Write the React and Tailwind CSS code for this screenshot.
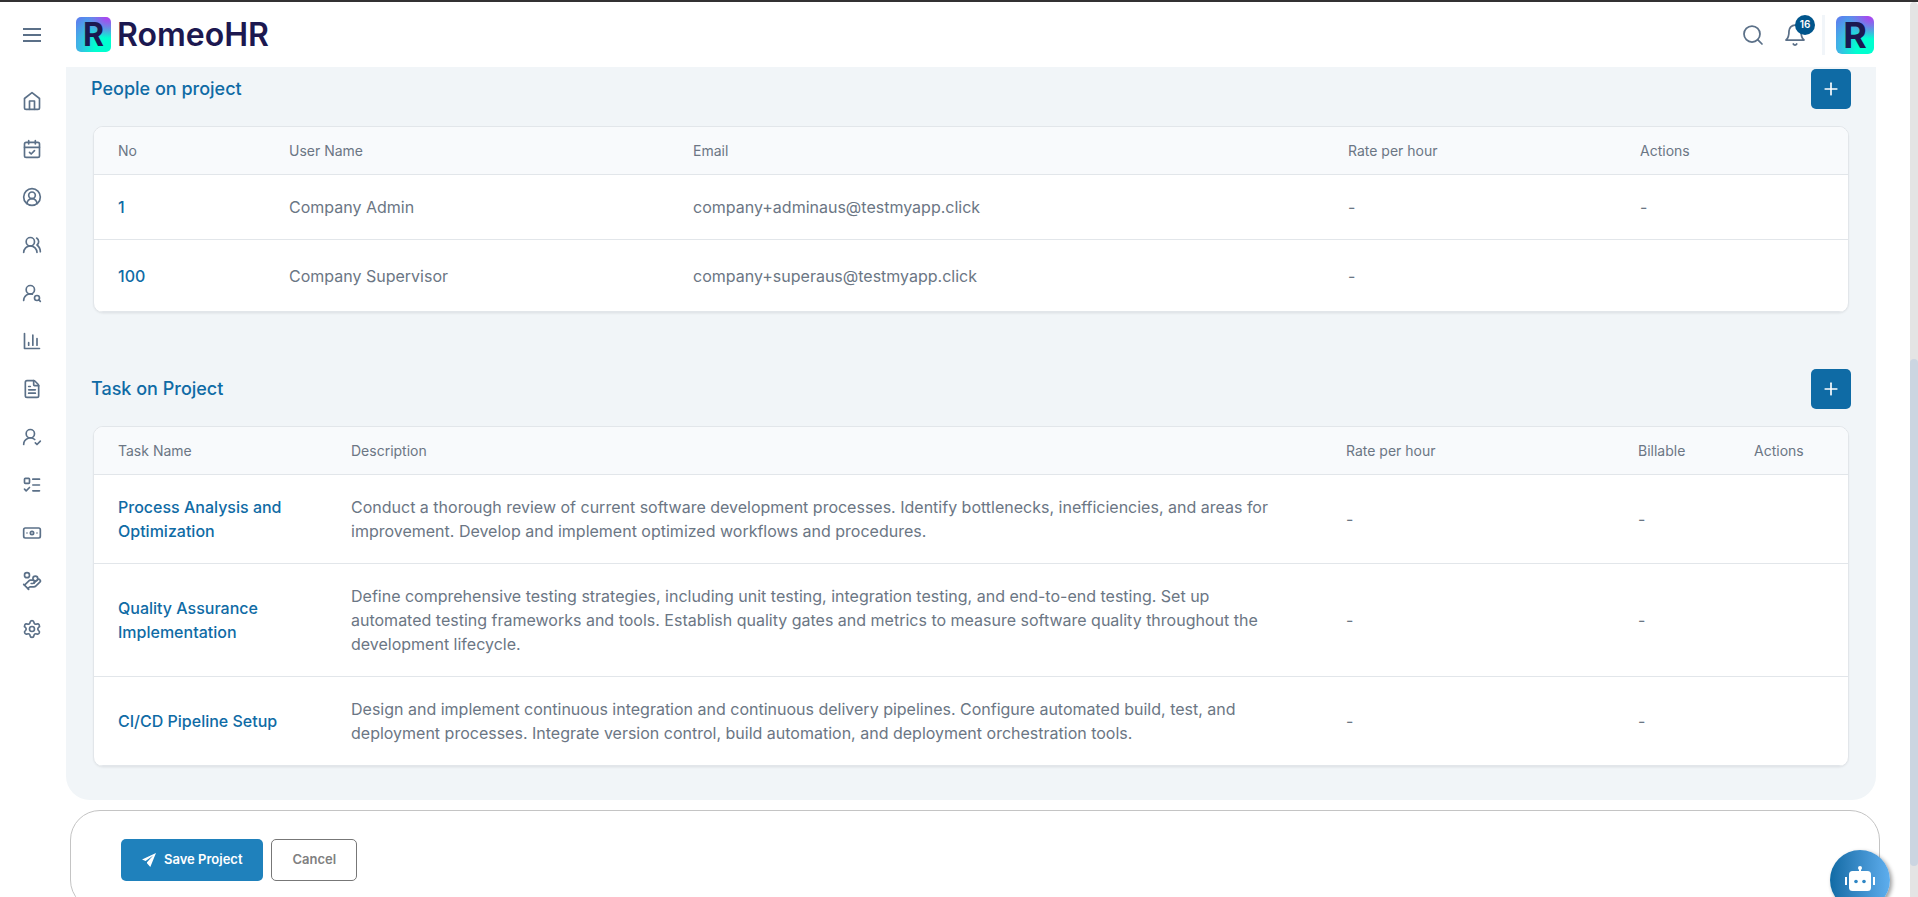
import React from 'react';
import {
  CalendarCheck,
  CircleUserRound,
  UsersRound,
  UserRoundSearch,
  FileText,
  UserRoundCheck,
  ListTodo,
  Banknote,
  HandCoins,
  Settings,
  Search,
  Plus,
} from 'lucide-react';

const MenuIcon = () => (
  <svg width="24" height="24" viewBox="0 0 24 24" fill="none" stroke="currentColor" strokeWidth="2">
    <path d="M3 6h18M3 12h18M3 18h18" />
  </svg>
);

const HomeIcon = ({ size = 20 }) => (
  <svg width={size} height={size} viewBox="0 0 24 24" fill="none" stroke="currentColor" strokeWidth="2" strokeLinecap="round" strokeLinejoin="round">
    <path d="m3 9 9-7 9 7v11a2 2 0 0 1-2 2H5a2 2 0 0 1-2-2z" />
    <path d="M9 22V12h6v10" />
  </svg>
);

const ChartIcon = ({ size = 20 }) => (
  <svg width={size} height={size} viewBox="0 0 24 24" fill="none" stroke="currentColor" strokeWidth="2" strokeLinecap="round" strokeLinejoin="round">
    <path d="M3 3v18h18" />
    <path d="M18 17V9M13 17V5M8 17v-3" />
  </svg>
);

const BellIcon = () => (
  <svg width="24" height="24" viewBox="0 0 24 24" fill="none" stroke="currentColor" strokeWidth="1.75" strokeLinecap="round" strokeLinejoin="round">
    <path d="M6 8a6 6 0 0 1 12 0c0 7 3 9 3 9H3s3-2 3-9" />
    <path d="M10.3 21a1.94 1.94 0 0 0 3.4 0" />
  </svg>
);

const PlaneIcon = () => (
  <svg width="14" height="14" viewBox="0 0 14 14" fill="currentColor">
    <path d="M14 0 0 6.5l3.6 1.6L11.2 2.600 5 9.200V10.300L8.300 14z" />
  </svg>
);

const BotIcon = () => (
  <svg width="30" height="28" viewBox="0 0 30 28">
    <g fill="white">
      <circle cx="15" cy="2" r="2" />
      <rect x="14" y="2" width="2" height="5" />
      <rect x="4" y="5" width="22" height="20" rx="3.500" />
      <rect x="0" y="11" width="2" height="8" />
      <rect x="28" y="11" width="2" height="8" />
    </g>
    <g fill="#2f87c5">
      <circle cx="11" cy="15.500" r="1.800" />
      <circle cx="19" cy="15.500" r="1.800" />
    </g>
  </svg>
);

const LogoMark = ({ className }) => (
  <span
    className={`flex items-center justify-center bg-[radial-gradient(circle_at_90%_0%,#b03ff0_0%,transparent_45%),radial-gradient(circle_at_85%_90%,#00ffd0_25%,#3fb4e6_65%,#5b83ee_90%)] font-bold text-[#1c1850] ${className}`}
  >
    R
  </span>
);

const navItems = [
  { label: 'Home', icon: HomeIcon },
  { label: 'Attendance', icon: CalendarCheck },
  { label: 'Profile', icon: CircleUserRound },
  { label: 'People', icon: UsersRound },
  { label: 'Recruitment', icon: UserRoundSearch },
  { label: 'Reports', icon: ChartIcon },
  { label: 'Documents', icon: FileText },
  { label: 'Approvals', icon: UserRoundCheck },
  { label: 'Tasks', icon: ListTodo },
  { label: 'Payroll', icon: Banknote },
  { label: 'Benefits', icon: HandCoins },
  { label: 'Settings', icon: Settings },
];

const people = [
  { no: '1', name: 'Company Admin', email: 'company+adminaus@testmyapp.click', rate: '-', actions: '-' },
  { no: '100', name: 'Company Supervisor', email: 'company+superaus@testmyapp.click', rate: '-', actions: '' },
];

const tasks = [
  {
    name: 'Process Analysis and Optimization',
    description:
      'Conduct a thorough review of current software development processes. Identify bottlenecks, inefficiencies, and areas for improvement. Develop and implement optimized workflows and procedures.',
  },
  {
    name: 'Quality Assurance Implementation',
    description:
      'Define comprehensive testing strategies, including unit testing, integration testing, and end-to-end testing. Set up automated testing frameworks and tools. Establish quality gates and metrics to measure software quality throughout the development lifecycle.',
  },
  {
    name: 'CI/CD Pipeline Setup',
    description:
      'Design and implement continuous integration and continuous delivery pipelines. Configure automated build, test, and deployment processes. Integrate version control, build automation, and deployment orchestration tools.',
  },
];

const SectionHeader = ({ title }) => (
  <div className="flex items-center justify-between">
    <h2 className="text-lg font-medium text-[#0f6ba5]">{title}</h2>
    <button aria-label={`Add to ${title}`} className="flex size-10 items-center justify-center rounded-[5px] bg-[#0f6ba5] text-white">
      <Plus size={20} strokeWidth={2} />
    </button>
  </div>
);

const DataTable = ({ columns, children }) => (
  <div className="mx-0.5 mt-[17px] overflow-hidden rounded-[10px] border border-[#e2e6ea] bg-white shadow-xs">
    <table className="w-full table-fixed border-separate border-spacing-0 text-left text-base text-[#6b7684] [&_td]:border-b [&_td]:border-[#e2e6ea] [&_th]:border-b [&_th]:border-[#e2e6ea]">
      <thead className="bg-[#f8fafc] text-sm">
        <tr>
          {columns.map((col) => (
            <th key={col.label} className={`h-12 pl-6 font-normal ${col.width}`}>{col.label}</th>
          ))}
        </tr>
      </thead>
      <tbody>{children}</tbody>
    </table>
  </div>
);

const peopleColumns = [
  { label: 'No', width: 'w-[171px]' },
  { label: 'User Name', width: 'w-[404px]' },
  { label: 'Email', width: '' },
  { label: 'Rate per hour', width: 'w-[292px]' },
  { label: 'Actions', width: 'w-[232px]' },
];

const taskColumns = [
  { label: 'Task Name', width: 'w-[233px]' },
  { label: 'Description', width: '' },
  { label: 'Rate per hour', width: 'w-[292px]' },
  { label: 'Billable', width: 'w-[116px]' },
  { label: 'Actions', width: 'w-[118px]' },
];

const App = () => {
  return (
    <div className="flex h-screen flex-col overflow-hidden border-t-2 border-[#333132] bg-white font-['Inter',sans-serif]">
      <div className="flex min-h-0 flex-1">
        <div className="flex min-w-0 flex-1 flex-col">
          {/* Top bar */}
          <header className="flex h-[65px] shrink-0 items-center pr-9">
            <button aria-label="Toggle menu" className="flex w-16 justify-center text-[#5b7088]">
              <MenuIcon />
            </button>
            <a href="#" className="ml-3 flex items-center gap-1.5 text-[#1c1850]">
              <LogoMark className="size-[35px] rounded-[5px] text-[32px]" />
              <span className="text-[32px] leading-none font-semibold">RomeoHR</span>
            </a>
            <div className="ml-auto flex items-center text-[#5b7088]">
              <button aria-label="Search">
                <Search size={24} strokeWidth={1.75} />
              </button>
              <button aria-label="Notifications" className="relative ml-[18px]">
                <BellIcon />
                <span className="absolute -top-2 left-3 flex size-5 items-center justify-center rounded-full bg-[#00558c] text-[10px] font-semibold text-white">
                  16
                </span>
              </button>
              <span className="ml-[15px] h-10 w-[3px] bg-[#f1f5f9]" />
              <button aria-label="Account" className="ml-[11px]">
                <LogoMark className="size-[38px] rounded-md text-[36px]" />
              </button>
            </div>
          </header>

          <div className="flex min-h-0 flex-1">
            {/* Sidebar */}
            <nav className="flex w-16 shrink-0 flex-col items-center gap-7 pt-6 text-[#5b7088]">
              {navItems.map(({ label, icon: Icon }) => (
                <a key={label} href="#" aria-label={label}>
                  <Icon size={20} />
                </a>
              ))}
            </nav>

            <main className="min-w-0 flex-1 overflow-hidden pr-[30px] pl-0.5">
              <div className="mr-1 rounded-b-3xl bg-[#f1f5f8] px-[25px] pt-0.5 pb-[33px]">
                <section>
                  <SectionHeader title="People on project" />
                  <DataTable columns={peopleColumns}>
                    {people.map((person) => (
                      <tr key={person.no}>
                        <td className="py-5 pl-6 font-medium text-[#0f6ba5]">{person.no}</td>
                        <td className="pl-6">{person.name}</td>
                        <td className="pl-6">{person.email}</td>
                        <td className="pl-6">{person.rate}</td>
                        <td className="pl-6">{person.actions || <div className="h-[71px]" />}</td>
                      </tr>
                    ))}
                  </DataTable>
                </section>

                <section className="mt-14">
                  <SectionHeader title="Task on Project" />
                  <DataTable columns={taskColumns}>
                    {tasks.map((task) => (
                      <tr key={task.name}>
                        <td className="py-5 pl-6 font-medium text-[#0f6ba5]">{task.name}</td>
                        <td className="py-5 pr-12 pl-6">{task.description}</td>
                        <td className="pl-6">-</td>
                        <td className="pl-6">-</td>
                        <td />
                      </tr>
                    ))}
                  </DataTable>
                </section>
              </div>

              {/* Form actions */}
              <div className="mt-2.5 ml-1 flex gap-2 rounded-[30px] border border-[#c4c4c4] px-[50px] py-7 text-[13px] font-semibold">
                <button className="flex h-[42px] items-center gap-2 rounded-[5px] bg-[#1f81bc] px-[21px] text-white">
                  <PlaneIcon />
                  Save Project
                </button>
                <button className="h-[42px] rounded-[5px] border border-[#777777] px-5 text-[#808080]">Cancel</button>
              </div>
            </main>
          </div>
        </div>

        {/* Scroll track */}
        <div className="flex w-2 shrink-0 flex-col rounded-t bg-[#e4e4e4] pt-[357px] pb-[31px]">
          <div className="flex-1 rounded-full bg-[#cbd5e1]" />
        </div>
      </div>

      <button
        aria-label="Open assistant"
        className="fixed right-7 -bottom-[13px] flex size-[60px] items-center justify-center rounded-full bg-linear-to-r from-[#0f6ba5] to-[#5eaeee] shadow-[2px_2px_4px_rgba(0,0,0,0.4)]"
      >
        <BotIcon />
      </button>
    </div>
  );
};

export default App;
